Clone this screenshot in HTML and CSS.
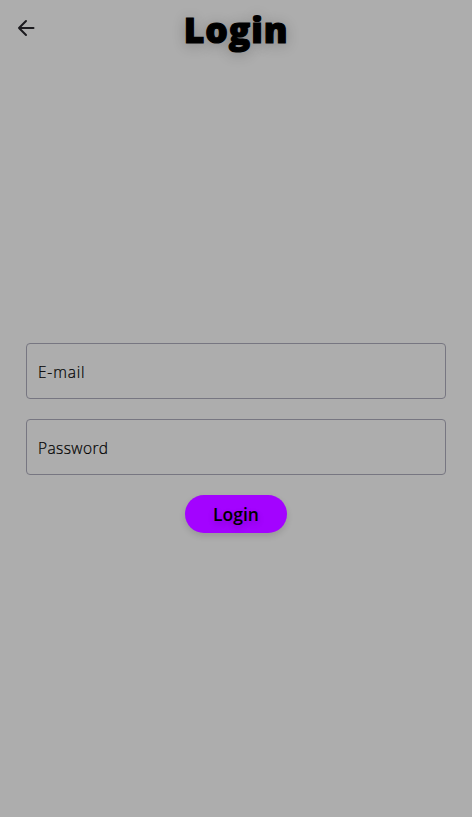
FILE: index.html
```html
<!DOCTYPE html>
<html lang="en">
<head>
<meta charset="utf-8">
<title>Login</title>
<link rel="stylesheet" href="styles.css">
</head>
<body>
<header class="app-bar">
  <button class="back" aria-label="Back"><svg viewBox="0 0 24 24" width="24" height="24"><path d="M19.5 12H5M12 5l-7 7 7 7"/></svg></button>
  <h1 class="title">Login</h1>
</header>
<main class="form">
  <div class="field email">E-mail</div>
  <div class="field">Password</div>
  <button class="submit">Login</button>
</main>
</body>
</html>
```
FILE: styles.css
```css
* { box-sizing: border-box; }
body {
  margin: 0;
  height: 817px;
  display: flex;
  flex-direction: column;
  background: #adadad;
  color: #000;
  font-family: "Open Sans", sans-serif;
}
.app-bar {
  height: 59px;
  display: grid;
  grid-template-columns: 52px 1fr 52px;
}
.back {
  border: 0;
  padding: 15px 0 0 14px;
  background: none;
  text-align: left;
  height: 40px;
}
.back svg {
  display: block;
  fill: none;
  stroke: #1c1b1f;
  stroke-width: 2;
  stroke-linecap: round;
  stroke-linejoin: round;
}
.title {
  margin: 0;
  text-align: center;
  font: 800 35.5px/58px "Open Sans", sans-serif;
  letter-spacing: .9px;
  -webkit-text-stroke: 1.2px #000;
  text-shadow: 0 2px 14px rgba(0, 0, 0, .28);
}
.form {
  flex: 1;
  display: flex;
  flex-direction: column;
  justify-content: center;
  align-items: center;
  gap: 20px;
  padding: 0 26px;
}
.field {
  width: 100%;
  height: 56px;
  padding: 2px 11px 0;
  border: 1px solid #777681;
  border-radius: 4px;
  font-size: 15.5px;
  font-weight: 300;
  line-height: 53px;
  letter-spacing: .4px;
  -webkit-text-stroke: .2px #000;
}
.email { letter-spacing: .8px; }
.submit {
  width: 102px;
  height: 38px;
  padding: 0;
  border: 0;
  border-radius: 19px;
  background: #a303ff;
  color: #000;
  font: 600 17.5px/36px "Open Sans", sans-serif;
  text-shadow: 0 3px 6px rgba(0, 0, 0, .2);
  box-shadow: 0 3px 6px rgba(0, 0, 0, .13);
}
```
